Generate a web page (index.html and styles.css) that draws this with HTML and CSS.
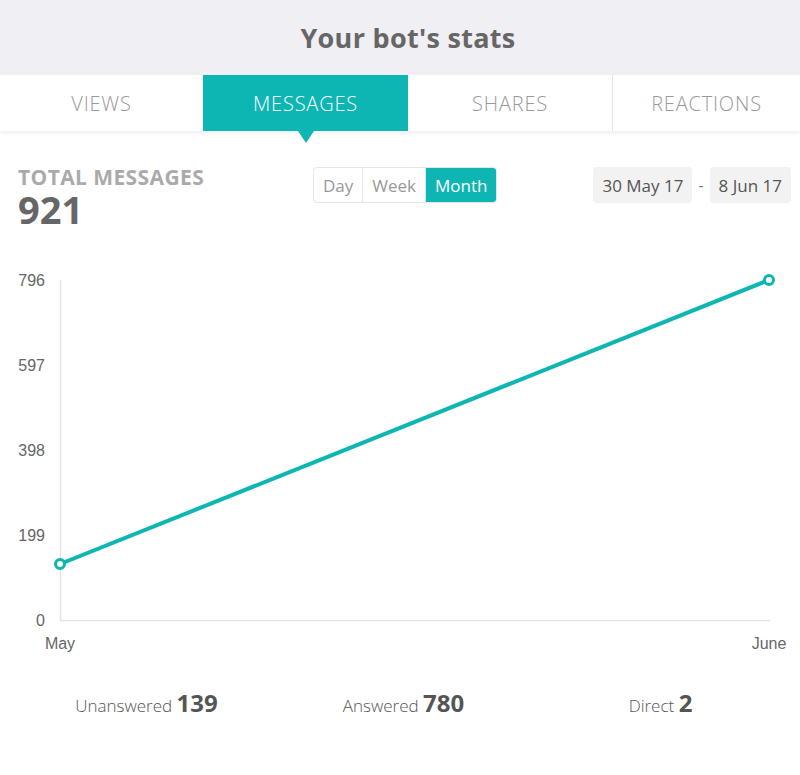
FILE: index.html
```html
<!DOCTYPE html>
<html lang="en">
<head>
    <meta charset="UTF-8">
    <meta name="viewport" content="width=device-width, initial-scale=1.0">
    <title>Your bot's stats</title>
    <link rel="stylesheet" href="styles.css">
</head>
<body>
    <header class="topbar">
        <h1>Your bot's stats</h1>
    </header>

    <nav class="tabs">
        <a class="tab">VIEWS</a>
        <a class="tab active">MESSAGES</a>
        <a class="tab">SHARES</a>
        <a class="tab">REACTIONS</a>
    </nav>

    <section class="summary">
        <div class="total">
            <div class="total-label">TOTAL MESSAGES</div>
            <div class="total-value">921</div>
        </div>
        <div class="period">
            <span class="period-btn">Day</span>
            <span class="period-btn">Week</span>
            <span class="period-btn active">Month</span>
        </div>
        <div class="dates">
            <span class="date">30 May 17</span>
            <span class="dash">-</span>
            <span class="date">8 Jun 17</span>
        </div>
    </section>

    <div class="chart">
        <svg width="800" height="420" viewBox="0 0 800 420">
            <g class="axis-labels">
                <text x="45" y="26" text-anchor="end">796</text>
                <text x="45" y="111" text-anchor="end">597</text>
                <text x="45" y="196" text-anchor="end">398</text>
                <text x="45" y="281" text-anchor="end">199</text>
                <text x="45" y="366" text-anchor="end">0</text>
                <text x="60" y="389" text-anchor="middle">May</text>
                <text x="769" y="389" text-anchor="middle">June</text>
            </g>
            <line x1="60.5" y1="20" x2="60.5" y2="360.5" stroke="#e2e2e2" stroke-width="1.5"/>
            <line x1="60" y1="360.5" x2="770" y2="360.5" stroke="#e2e2e2" stroke-width="1.5"/>
            <line x1="60" y1="304" x2="769" y2="20" stroke="#0db5b3" stroke-width="4"/>
            <circle cx="60" cy="304" r="4.5" fill="#fff" stroke="#0db5b3" stroke-width="3"/>
            <circle cx="769" cy="20" r="4.5" fill="#fff" stroke="#0db5b3" stroke-width="3"/>
        </svg>
    </div>

    <section class="breakdown">
        <div class="item">Unanswered <b>139</b></div>
        <div class="item">Answered <b>780</b></div>
        <div class="item">Direct <b>2</b></div>
    </section>
</body>
</html>
```

FILE: styles.css
```css
body{
    margin: 0;
    font-family: "Open Sans", "Noto Sans", sans-serif;
    background-color: #fff;
    color: #666;
}
.topbar{
    height: 75px;
    background-color: #efeff4;
    display: flex;
    align-items: center;
    justify-content: center;
    padding-left: 16px;
}
.topbar h1{
    margin: 0;
    font-size: 27px;
    font-weight: 700;
    letter-spacing: 0.3px;
    color: #666;
}
.tabs{
    display: grid;
    grid-template-columns: 203px 205px 204px 1fr;
    height: 56px;
    background-color: #fff;
    box-shadow: 0 2px 4px rgba(0, 0, 0, 0.07);
    position: relative;
}
.tab{
    display: flex;
    align-items: center;
    justify-content: center;
    font-size: 20px;
    font-weight: 300;
    letter-spacing: 0.8px;
    color: #999;
    position: relative;
}
.tab:nth-child(4){
    border-left: 1px solid #e6e6e6;
}
.tab.active{
    background-color: #0db5b3;
    color: #fff;
}
.tab.active::after{
    content: "";
    position: absolute;
    left: 50%;
    bottom: -12px;
    margin-left: -8px;
    border-left: 8px solid transparent;
    border-right: 8px solid transparent;
    border-top: 12px solid #0db5b3;
}
.summary{
    display: flex;
    align-items: flex-start;
    padding: 36px 9px 0 18px;
    height: 96px;
    box-sizing: border-box;
}
.total{
    width: 295px;
    margin-top: -2px;
}
.total-label{
    font-size: 21px;
    font-weight: 700;
    letter-spacing: 0.4px;
    color: #aaa;
    line-height: 24px;
}
.total-value{
    font-size: 38px;
    font-weight: 700;
    color: #666;
    line-height: 40px;
}
.period{
    display: flex;
    border: 1px solid #e6e6e6;
    border-radius: 4px;
    overflow: hidden;
    height: 34px;
}
.period-btn{
    display: flex;
    align-items: center;
    padding: 0 9px;
    font-size: 17px;
    color: #999;
    border-right: 1px solid #e6e6e6;
}
.period-btn.active{
    background-color: #0db5b3;
    color: #fff;
    border-right: 0;
}
.dates{
    margin-left: auto;
    display: flex;
    align-items: center;
    gap: 6px;
}
.date{
    background-color: #f2f2f2;
    border-radius: 4px;
    padding: 0 9px;
    height: 36px;
    display: flex;
    align-items: center;
    font-size: 17px;
    color: #555;
}
.dash{
    font-size: 16px;
    color: #777;
}
.chart{
    margin-top: 33px;
}
.chart svg{
    display: block;
}
.axis-labels text{
    font-family: "Liberation Sans", Arial, sans-serif;
    font-size: 16px;
    fill: #666;
}
.breakdown{
    display: grid;
    grid-template-columns: repeat(3, 1fr);
    padding: 0 11px 0 18px;
    margin-top: 6px;
}
.item{
    text-align: center;
    font-size: 17px;
    font-weight: 300;
    color: #555;
}
.item b{
    font-size: 24px;
    font-weight: 700;
}
```
